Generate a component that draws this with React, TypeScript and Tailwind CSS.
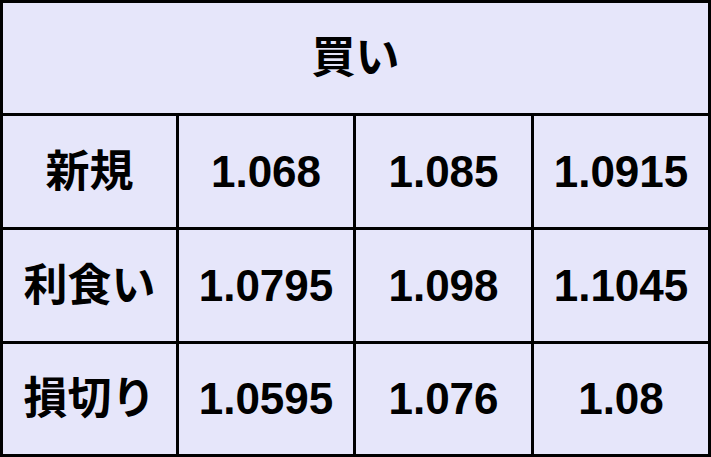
import React from 'react';

const rows = [
  { label: '新規', values: ['1.068', '1.085', '1.0915'] },
  { label: '利食い', values: ['1.0795', '1.098', '1.1045'] },
  { label: '損切り', values: ['1.0595', '1.076', '1.08'] },
];

export default function App() {
  return (
    <div
      className="w-[711px] h-[457px] bg-black p-[3px] grid grid-cols-[173px_174px_175px_174px] grid-rows-[110px_111px_111px_110px] gap-[3px] text-black font-bold text-[44px]"
      style={{ fontFamily: '"Liberation Sans", "Noto Sans CJK JP", sans-serif' }}
    >
      {/* Header */}
      <div className="col-span-4 bg-[#e6e6fa] flex items-center justify-center">買い</div>

      {rows.map((row) => (
        <React.Fragment key={row.label}>
          <div className="bg-[#e6e6fa] flex items-center justify-center">{row.label}</div>
          {row.values.map((v, i) => (
            <div key={i} className="bg-[#e6e6fa] flex items-center justify-center">
              {v}
            </div>
          ))}
        </React.Fragment>
      ))}
    </div>
  );
}
